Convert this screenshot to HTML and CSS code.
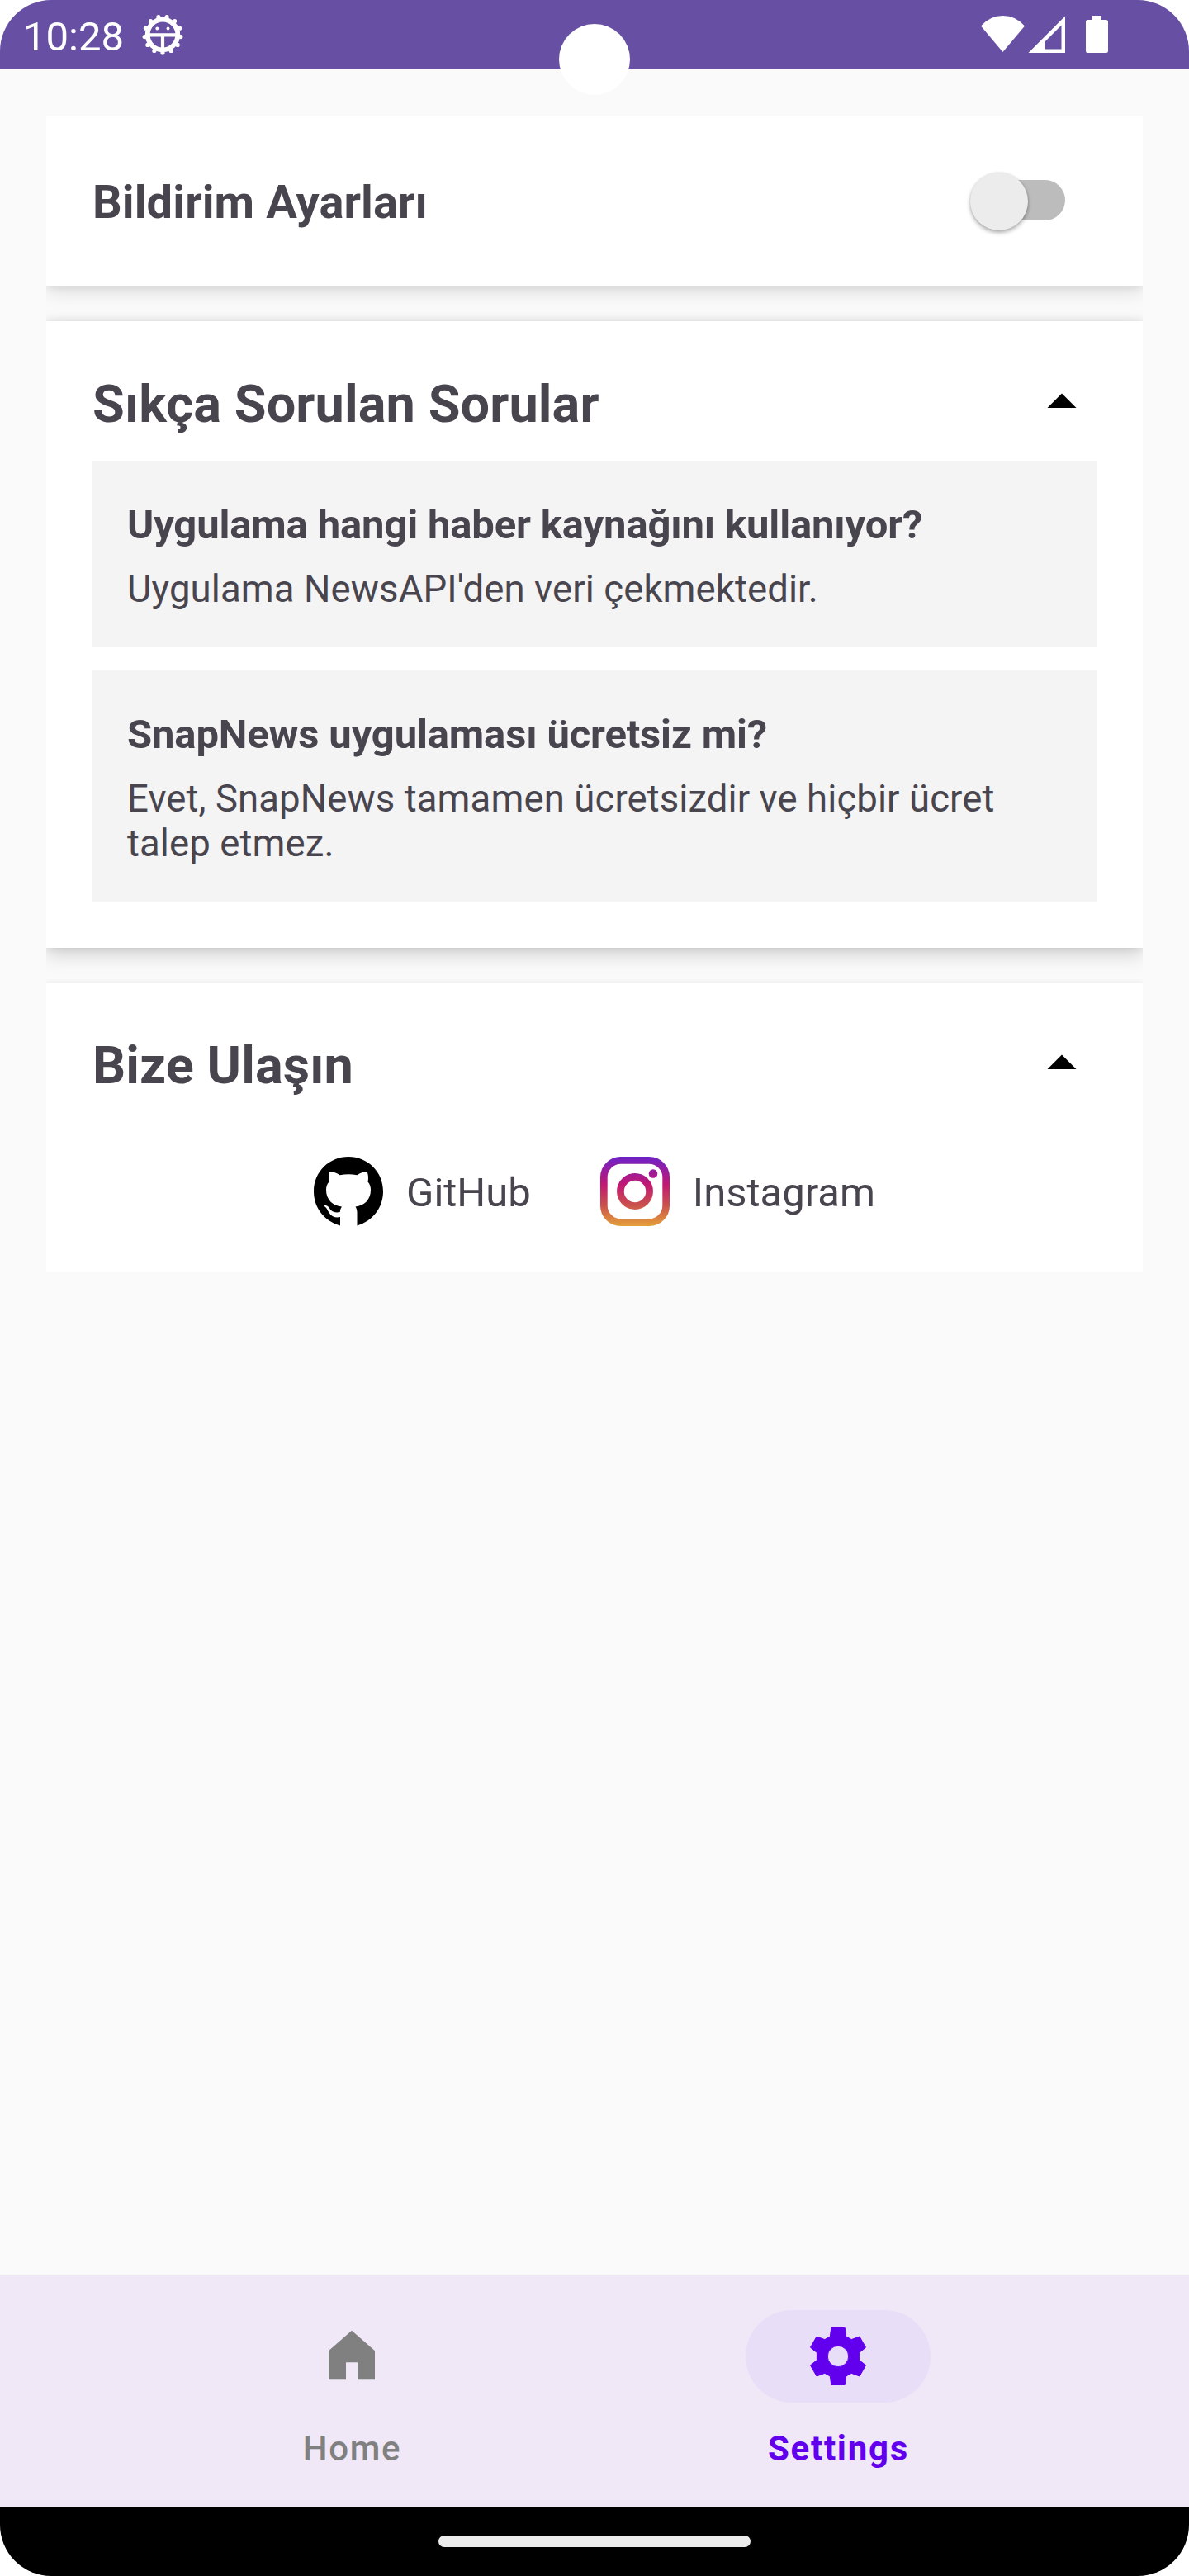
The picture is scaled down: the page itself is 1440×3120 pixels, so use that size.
FILE: index.html
```html
<!DOCTYPE html>
<html lang="tr">
<head>
<meta charset="utf-8">
<title>SnapNews</title>
<link rel="stylesheet" href="styles.css">
</head>
<body>
<div class="screen">
  <header class="status">
    <span class="clock">10:28</span>
    <svg class="debug" viewBox="0 0 50 50" width="50" height="50">
      <circle cx="25" cy="25" r="18.300" fill="none" stroke="#fff" stroke-width="5.800"/>
      <circle cx="25" cy="25" r="22" fill="none" stroke="#fff" stroke-width="5.200" stroke-linecap="round" pathLength="13" stroke-dasharray="0 1" transform="rotate(90 25 25)"/>
      <path d="M7 25.300h36M25 25v18" stroke="#fff" stroke-width="4.200"/>
      <circle cx="18.300" cy="17.500" r="1.900" fill="#fff"/><circle cx="31.500" cy="17.500" r="1.900" fill="#fff"/>
    </svg>
    <svg class="signals" viewBox="0 0 160 50" width="160" height="50" fill="#fff">
      <path d="M0 14.500Q11 2 26.500 2T53 14.500L26.500 46z"/>
      <path fill-rule="evenodd" d="M102 2.500V47H57.500zM97.500 13.500 77.500 33.500V42.500H97.500z"/>
      <path d="M135 2h11v5h5.500q2.500 0 2.500 2.500v35q0 2.500-2.500 2.500h-22q-2.500 0-2.500-2.500v-35q0-2.500 2.500-2.500h5.500z"/>
    </svg>
    <span class="camera"></span>
  </header>

  <main class="content">
    <div class="cards">
      <section class="card row">
        <h2 class="label">Bildirim Ayarları</h2>
        <span class="switch"><span class="thumb"></span></span>
      </section>

      <section class="card faq">
        <div class="head">
          <h2>Sıkça Sorulan Sorular</h2>
          <svg viewBox="0 0 24 24" width="84" height="84"><path d="M7 14l5-5 5 5z"/></svg>
        </div>
        <article class="item">
          <h3>Uygulama hangi haber kaynağını kullanıyor?</h3>
          <p>Uygulama NewsAPI'den veri çekmektedir.</p>
        </article>
        <article class="item tall">
          <h3>SnapNews uygulaması ücretsiz mi?</h3>
          <p>Evet, SnapNews tamamen ücretsizdir ve hiçbir ücret talep etmez.</p>
        </article>
      </section>

      <section class="card contact">
        <div class="head">
          <h2>Bize Ulaşın</h2>
          <svg viewBox="0 0 24 24" width="84" height="84"><path d="M7 14l5-5 5 5z"/></svg>
        </div>
        <div class="links">
          <a class="link">
            <svg viewBox="0 0 84 84" width="84" height="84">
              <path d="M32 83.500C13 78 0 62 0 42 0 18 19 0 42 0S84 18 84 42c0 20-13 36-31.500 41.500V68c0-3-.7-5.500-2-7.500C61 59 69 52.500 69 40c0-3.500-1-7-3.500-9.500C66.500 27 66 21 64.500 18 60.500 18 56 20 52.500 22.200c-7-1.300-14-1.300-21 0C28 20 23.500 18 19.500 18c-1.500 3-2 9-1 12.500C16 33 15 36.500 15 40c0 12.500 8 19 19 20.500-1.200 1.500-2 3.500-2.200 6.500-7 1.500-10.500-1-13-5-1.500-2-3.500-3.500-6.500-3.500-1 .7 2 2 3.500 4.500C19 69 22 75 32 73z"/>
            </svg>
            <span>GitHub</span>
          </a>
          <a class="link">
            <svg viewBox="0 0 84 84" width="84" height="84">
              <defs><linearGradient id="ig" gradientUnits="userSpaceOnUse" x1="0" y1="0" x2="0" y2="84">
                <stop offset="0" stop-color="#6e22c8"/><stop offset=".4" stop-color="#c11873"/><stop offset=".7" stop-color="#ca514c"/><stop offset="1" stop-color="#e4a03a"/>
              </linearGradient></defs>
              <g fill="none" stroke="url(#ig)" stroke-width="8.700">
                <rect x="4.350" y="4.350" width="75.300" height="75.300" rx="20.500"/>
                <circle cx="42" cy="42" r="17.600"/>
              </g>
              <circle cx="64" cy="20.500" r="5.300" fill="url(#ig)"/>
            </svg>
            <span>Instagram</span>
          </a>
        </div>
      </section>
    </div>
  </main>

  <nav class="nav">
    <a class="tab">
      <span class="pill"><svg viewBox="0 0 24 24" width="84" height="84"><path d="M12 3.100l8 7v10h-6v-6h-4v6H4v-10z"/></svg></span>
      <span class="name">Home</span>
    </a>
    <a class="tab active">
      <span class="pill"><svg viewBox="0 0 84 84" width="84" height="84"><path fill-rule="evenodd" stroke="currentColor" stroke-width="1" stroke-linejoin="round" d="M33.800 7.500H50.200L51.700 18 58.200 21.600 68 18 75.500 31.200 67.600 37.500V46.500L75.500 52.800 68 66 58.200 62.400 51.700 66 50.200 76.500H33.800L32.300 66 25.800 62.400 16 66 8.500 52.800 16.400 46.500V37.500L8.500 31.200 16 18 25.800 21.600 32.300 18zM42 29.300a12.700 12.700 0 1 0 0 25.400 12.700 12.700 0 1 0 0-25.400z"/></svg></span>
      <span class="name">Settings</span>
    </a>
  </nav>
  <footer class="gesture"><span></span></footer>
</div>
</body>
</html>
```
FILE: styles.css
```css
* { box-sizing: border-box; margin: 0; padding: 0; }
body { background: #fff; font-family: Roboto, sans-serif; color: #49454f; }
svg { display: block; flex: none; }
.screen { width: 1440px; height: 3120px; display: flex; flex-direction: column; background: #fafafa; border-radius: 62px; overflow: hidden; }

.status { position: relative; height: 84px; background: #6750a3; display: flex; padding: 0 92px 0 28px; color: #fff; }
.clock { font-size: 49px; line-height: 57px; padding-top: 16px; width: 144px; white-space: nowrap; }
.debug { margin-top: 17px; }
.signals { margin: 17px 0 0 auto; }
.camera { position: absolute; left: 677px; top: 29px; width: 86px; height: 86px; border-radius: 50%; background: #fff; z-index: 2; }

.content { flex: 1; padding: 56px; }
.cards { display: flex; flex-direction: column; gap: 42px; overflow: hidden; }
.card { background: #fff; padding: 56px; box-shadow: 0 6px 22px rgba(0,0,0,.12), 0 1px 10px rgba(0,0,0,.07); }
.row { height: 207px; display: flex; align-items: center; justify-content: space-between; }
.label { font-size: 56px; line-height: 66px; padding-top: 3px; letter-spacing: .08px; }
.switch { width: 98px; height: 49px; border-radius: 25px; background: #bcbcbc; margin-right: 38px; margin-top: -2px; }
.thumb { display: block; width: 70px; height: 70px; margin: -9px 0 0 -17px; border-radius: 50%; background: #ececec; box-shadow: 0 3px 5px rgba(0,0,0,.3), 0 0 3px rgba(0,0,0,.12); }

.faq { height: 759px; box-shadow: 0 8px 22px rgba(0,0,0,.17), 0 0 10px rgba(0,0,0,.1); }
.contact { height: 351px; box-shadow: 0 2px 8px rgba(0,0,0,.13); }
.head { display: flex; justify-content: space-between; height: 113px; }
.head h2 { font-size: 63px; line-height: 74px; padding-top: 8px; letter-spacing: .1px; }
.item { height: 226px; background: #f4f4f4; padding: 49px 42px 0; }
.tall { height: 280px; margin-top: 28px; }
.item h3 { font-size: 49px; line-height: 57px; letter-spacing: -.16px; }
.item p { font-size: 45.5px; line-height: 54px; margin-top: 23px; letter-spacing: .1px; }

.links { display: flex; justify-content: center; gap: 84px; padding-top: 42px; }
.link { display: flex; align-items: center; gap: 28px; font-size: 49px; line-height: 57px; }
.link span { padding-top: 2px; }

.nav { height: 280px; background: #f0e8f7; padding: 42px 131px 0; display: grid; grid-template-columns: 1fr 1fr; }
.tab { display: flex; flex-direction: column; align-items: center; color: #808080; }
.pill { width: 224px; height: 112px; border-radius: 56px; display: flex; align-items: center; justify-content: center; }
.pill svg { fill: currentColor; }
.name { font-size: 42px; line-height: 49px; font-weight: 500; letter-spacing: 1.75px; margin-top: 31px; padding-left: 2px; }
.active { color: #6200ee; }
.active .pill { background: #e8def7; }
.active .name { font-weight: 700; }
.gesture { height: 84px; background: #000; display: flex; align-items: center; justify-content: center; }
.gesture span { width: 378px; height: 14px; border-radius: 7px; background: #ececec; }
```
